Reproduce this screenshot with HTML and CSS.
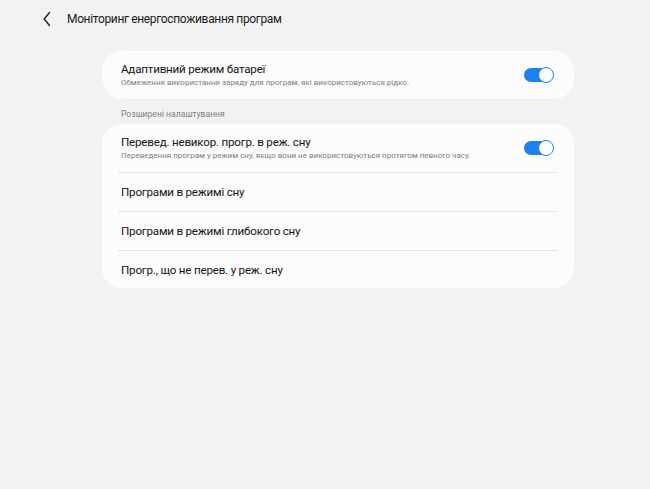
FILE: index.html
```html
<!DOCTYPE html>
<html lang="uk">
<head>
<meta charset="utf-8">
<link rel="stylesheet" href="styles.css">
</head>
<body>
<header class="topbar">
  <svg class="back" width="8" height="16" viewBox="0 0 8 16"><path d="M6.5 1.5 L1.2 8 L6.5 14.5" fill="none" stroke="#222" stroke-width="1.4" stroke-linecap="round" stroke-linejoin="round"/></svg>
  <h1 class="title">Моніторинг енергоспоживання програм</h1>
</header>
<main class="content">
  <section class="card">
    <div class="row row-tall">
      <div class="texts">
        <div class="row-title">Адаптивний режим батареї</div>
        <div class="row-sub">Обмеження використання заряду для програм, які використовуються рідко.</div>
      </div>
      <span class="switch"><span class="thumb"></span></span>
    </div>
  </section>
  <div class="section-label">Розширені налаштування</div>
  <section class="card">
    <div class="row row-tall">
      <div class="texts">
        <div class="row-title">Перевед. невикор. прогр. в реж. сну</div>
        <div class="row-sub">Переведення програм у режим сну, якщо вони не використовуються протягом певного часу.</div>
      </div>
      <span class="switch"><span class="thumb"></span></span>
    </div>
    <div class="row"><div class="row-title">Програми в режимі сну</div></div>
    <div class="row"><div class="row-title">Програми в режимі глибокого сну</div></div>
    <div class="row"><div class="row-title">Прогр., що не перев. у реж. сну</div></div>
  </section>
</main>
</body>
</html>
```
FILE: styles.css
```css
* { box-sizing: border-box; }
html, body { margin: 0; padding: 0; }
body {
  background: #f2f2f2;
  font-family: Roboto, "Noto Sans", sans-serif;
  color: #111;
  width: 650px;
  height: 489px;
}
.topbar {
  height: 38px;
  display: flex;
  align-items: center;
  padding-left: 43px;
}
.back { display: block; margin-top: 0; }
.title {
  margin: 0 0 0 16px;
  font-size: 12px;
  font-weight: 400;
  color: #1a1a1a;
  letter-spacing: -0.35px;
}
.content {
  margin: 13px 0 0 102px;
  width: 472px;
}
.card {
  background: #fcfcfc;
  border-radius: 20px;
  padding: 0 19px;
}
.row {
  display: flex;
  align-items: center;
  height: 39px;
  border-top: 1px solid #e4e4e4;
}
.card .row:first-child { border-top: none; }
.row-tall { height: 48px; }
.row:last-child { height: 38px; }
.row-tall:last-child { height: 48px; }
.card .row + .row { margin: 0 -3px; padding: 0 3px; }
.texts { flex: 1; }
.row-title {
  font-size: 11.6px;
  letter-spacing: -0.2px;
  color: #141414;
  line-height: 14px;
}
.row-sub {
  font-size: 8px;
  color: #7d7d7d;
  line-height: 11px;
  margin-top: 1px;
}
.switch {
  position: relative;
  width: 29px;
  height: 14px;
  background: #1a82f5;
  border-radius: 7px;
  margin-right: 2px;
}
.thumb {
  position: absolute;
  right: -1px;
  top: -1px;
  width: 16px;
  height: 16px;
  border-radius: 50%;
  background: #fff;
  border: 1.4px solid #1a82f5;
}
.section-label {
  font-size: 8.6px;
  color: #808080;
  padding: 0 0 0 19px;
  height: 25px;
  line-height: 30px;
}
```
